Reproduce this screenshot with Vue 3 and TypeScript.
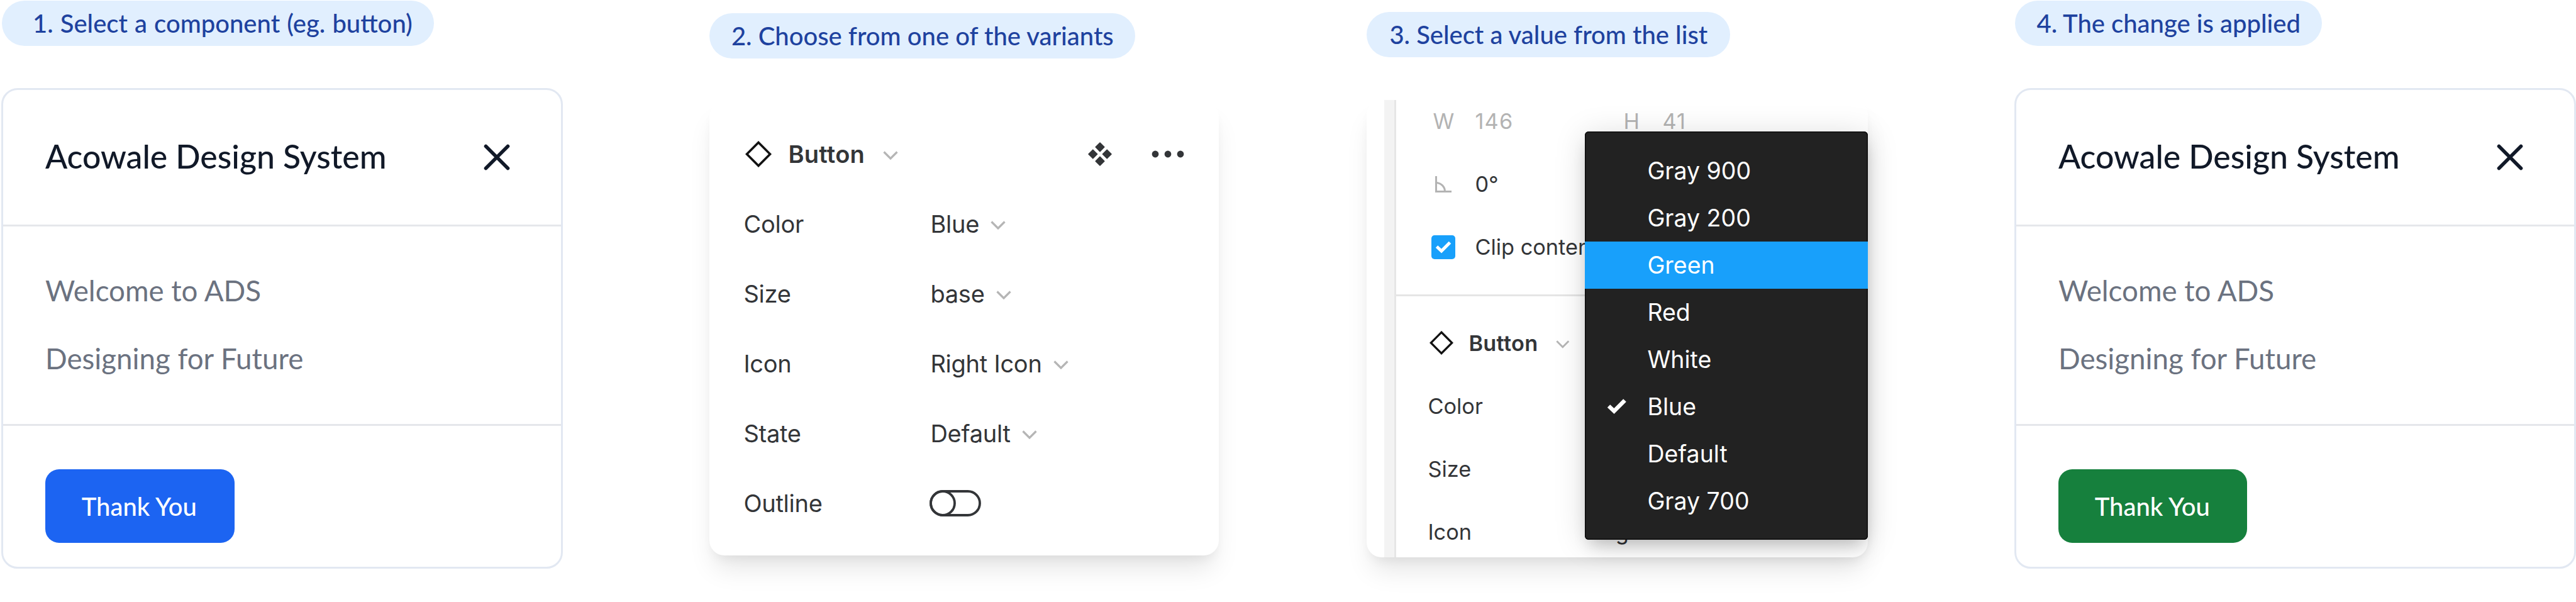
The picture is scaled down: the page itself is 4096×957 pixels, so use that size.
<script setup lang="ts">
interface Property {
  label: string
  value?: string
}

const properties: Property[] = [
  { label: 'Color', value: 'Blue' },
  { label: 'Size', value: 'base' },
  { label: 'Icon', value: 'Right Icon' },
  { label: 'State', value: 'Default' },
  { label: 'Outline' },
]

const colors: string[] = ['Gray 900', 'Gray 200', 'Green', 'Red', 'White', 'Blue', 'Default', 'Gray 700']
const highlighted = 'Green'
const selected = 'Blue'
</script>

<template>
  <main class="steps">
    <section class="step step-select">
      <h2 class="pill pill-first">1. Select a component (eg. button)</h2>
      <article class="modal">
        <header class="modal-head">
          <h3 class="modal-title">Acowale Design System</h3>
          <svg class="close" viewBox="0 0 42 42"><path d="M3.5 3.5 38.5 38.5M38.5 3.5 3.5 38.5" /></svg>
        </header>
        <div class="modal-body">
          <p>Welcome to ADS</p>
          <p>Designing for Future</p>
        </div>
        <footer class="modal-foot"><button class="cta blue">Thank You</button></footer>
      </article>
    </section>

    <section class="step step-variants">
      <h2 class="pill">2. Choose from one of the variants</h2>
      <article class="panel">
        <div class="row">
          <svg class="diamond" viewBox="0 0 42 42"><path d="M21 2.5 39.5 21 21 39.5 2.5 21Z" /></svg>
          <strong class="name">Button</strong>
          <svg class="chevron" viewBox="0 0 24 14"><path d="M1.5 1.5 12 12 22.5 1.5" /></svg>
          <svg class="variants-icon" viewBox="0 0 38 38">
            <path d="M19 1l6.8 6.8L19 14.6l-6.8-6.8ZM19 23.4l6.8 6.8L19 37l-6.8-6.8ZM7.8 12.2l6.8 6.8-6.8 6.8L1 19ZM30.2 12.2L37 19l-6.8 6.8-6.8-6.8Z" />
          </svg>
          <svg class="more" viewBox="0 0 52 12"><circle cx="6" cy="6" r="5.4" /><circle cx="26" cy="6" r="5.4" /><circle cx="46" cy="6" r="5.4" /></svg>
        </div>
        <div v-for="p in properties" :key="p.label" class="row">
          <span class="label">{{ p.label }}</span>
          <template v-if="p.value">
            <span>{{ p.value }}</span>
            <svg class="chevron" viewBox="0 0 24 14"><path d="M1.5 1.5 12 12 22.5 1.5" /></svg>
          </template>
          <svg v-else class="toggle" viewBox="0 0 82 42">
            <rect x="2" y="2" width="78" height="38" rx="19" /><circle cx="21" cy="21" r="19" />
          </svg>
        </div>
      </article>
    </section>

    <section class="step step-value">
      <h2 class="pill">3. Select a value from the list</h2>
      <article class="inspector">
        <div class="gutter"></div>
        <div class="fields">
          <div class="group layout">
            <div class="line">
              <span class="key key-w">W</span><span class="num muted">146</span>
              <span class="key key-h">H</span><span class="num muted">41</span>
            </div>
            <div class="line">
              <span class="key"><svg class="angle" viewBox="0 0 26 26"><path d="M1.5 0V24.5H26M1.5 10.5A14 14 0 0 1 15.5 24.5" /></svg></span>
              <span class="num">0°</span>
            </div>
            <div class="line">
              <span class="key"><svg class="check" viewBox="0 0 38 38"><rect width="38" height="38" rx="5" /><path d="M8.5 18 16 25 29.5 11.5" /></svg></span>
              <span>Clip content</span>
            </div>
          </div>
          <div class="group variant">
            <div class="line">
              <svg class="diamond" viewBox="0 0 42 42"><path d="M21 2.5 39.5 21 21 39.5 2.5 21Z" /></svg>
              <strong class="name">Button</strong>
              <svg class="chevron" viewBox="0 0 24 14"><path d="M1.5 1.5 12 12 22.5 1.5" /></svg>
            </div>
            <div v-for="p in properties.slice(0, 3)" :key="p.label" class="line">
              <span class="label">{{ p.label }}</span><span>{{ p.value }}</span>
              <svg class="chevron" viewBox="0 0 24 14"><path d="M1.5 1.5 12 12 22.5 1.5" /></svg>
            </div>
          </div>
        </div>
        <ul class="menu">
          <li v-for="c in colors" :key="c" :class="{ active: c === highlighted }">
            <svg v-if="c === selected" class="tick" viewBox="0 0 32 26"><path d="M3 12.5 11.5 20.5 28.5 3.5" /></svg>
            {{ c }}
          </li>
        </ul>
      </article>
    </section>

    <section class="step step-applied">
      <h2 class="pill">4. The change is applied</h2>
      <article class="modal">
        <header class="modal-head">
          <h3 class="modal-title">Acowale Design System</h3>
          <svg class="close" viewBox="0 0 42 42"><path d="M3.5 3.5 38.5 38.5M38.5 3.5 3.5 38.5" /></svg>
        </header>
        <div class="modal-body">
          <p>Welcome to ADS</p>
          <p>Designing for Future</p>
        </div>
        <footer class="modal-foot"><button class="cta green">Thank You</button></footer>
      </article>
    </section>
  </main>
</template>

<style>
body {
  background: #fff;
}
</style>

<style scoped>
* {
  box-sizing: border-box;
}

.steps {
  display: flex;
  align-items: flex-start;
  width: 4096px;
  height: 957px;
  padding-left: 2px;
  overflow: hidden;
  font-family: Inter, 'Liberation Sans', sans-serif;
  white-space: nowrap;
}

.step {
  flex: none;
  display: flex;
  flex-direction: column;
  align-items: flex-start;
}

.step-select {
  width: 1126.4px;
  padding-top: 1px;
}

.step-variants {
  width: 1045px;
  padding-top: 21px;
}

.step-value {
  width: 1029.6px;
  padding-top: 18.5px;
}

.step-applied {
  padding-top: 1px;
}

svg {
  flex: none;
  display: block;
  fill: none;
}

.pill {
  height: 72px;
  margin: 0;
  padding: 0 34.5px;
  border-radius: 36px;
  background: #e1effe;
  color: #1e429f;
  font: 500 40px/72px Lato, sans-serif;
}

.pill-first {
  margin-left: 1px;
  padding: 0 34px 0 49px;
  word-spacing: 1px;
}

.step-value .pill {
  padding: 0 36px;
}

.step-applied .pill {
  margin-left: 1px;
}

/* Modal preview */
.modal {
  width: 893px;
  height: 764px;
  margin-top: 67px;
  border: 3px solid #e2e8f2;
  border-radius: 26px;
  background: #fff;
  font-family: Lato, sans-serif;
}

.modal-head {
  display: flex;
  justify-content: space-between;
  align-items: center;
  height: 217px;
  padding: 0 81px 0 67px;
  border-bottom: 3px solid #e5e7eb;
}

.modal-title {
  margin: 0;
  padding-bottom: 5px;
  color: #111928;
  font-size: 51.8px;
  font-weight: 500;
}

.close {
  width: 42px;
  height: 42px;
  stroke: #111928;
  stroke-width: 5.6;
  stroke-linecap: round;
}

.modal-body {
  height: 317px;
  padding: 47.6px 67px 0;
  border-bottom: 3px solid #e5e7eb;
  color: #6b7280;
  font-size: 45.7px;
  line-height: 108.5px;
}

.modal-body p {
  margin: 0;
}

.modal-foot {
  padding: 69px 67px 0;
}

.cta {
  width: 300.5px;
  height: 117px;
  padding: 0 2px 0 0;
  border: 0;
  border-radius: 22px;
  color: #fff;
  font: 500 40px Lato, sans-serif;
}

.blue {
  background: #1c64f2;
}

.green {
  background: #16803d;
}

/* Component property panel */
.panel,
.inspector {
  border-radius: 24px;
  background: #fff;
  box-shadow: 0 28px 42px -8px rgba(0, 0, 0, 0.1), 0 11px 17px -6px rgba(0, 0, 0, 0.06);
  color: #333538;
}

.panel {
  width: 810px;
  height: 721.5px;
  margin-top: 68.5px;
  padding: 27.5px 53px 27.5px 54px;
  font-size: 38px;
  letter-spacing: -0.25px;
}

.row {
  display: flex;
  align-items: center;
  height: 111px;
}

.row .label {
  width: 297px;
}

.name {
  font-weight: 600;
  letter-spacing: 0.3px;
}

.diamond {
  stroke: #111;
  stroke-width: 3.6;
}

.row .diamond {
  width: 42px;
  height: 42px;
  margin: 0 26px 0 3px;
}

.chevron {
  stroke: #b5b5b5;
  stroke-width: 3.2;
}

.row .chevron {
  width: 24px;
  height: 14px;
  margin: 5px 0 0 18px;
}

.row .name + .chevron {
  margin-left: 29px;
}

.variants-icon {
  width: 38px;
  height: 38px;
  margin-left: auto;
  fill: #333538;
  stroke: #333538;
  stroke-linejoin: round;
  stroke-width: 1.6;
}

.more {
  width: 52px;
  height: 12px;
  margin: 0 2px 0 63px;
  fill: #333538;
}

.toggle {
  width: 82px;
  height: 42px;
  margin-left: -1px;
  stroke: #333538;
  stroke-width: 3.8;
}

/* Inspector with the colour menu */
.inspector {
  position: relative;
  display: flex;
  width: 797px;
  height: 727px;
  margin-top: 68px;
  padding-left: 28px;
  font-size: 34.3px;
}

.gutter {
  width: 19px;
  border-right: 3.5px solid #e6e6e6;
  background: #f3f3f3;
}

.fields {
  flex: 1;
  overflow: hidden;
  border-radius: 0 24px 24px 0;
}

.layout {
  margin-top: -15.7px;
  padding: 0 0 25.2px 56px;
  border-bottom: 3px solid #e5e5e5;
}

.variant {
  padding: 24.2px 0 0 50px;
}

.line {
  display: flex;
  align-items: center;
  height: 100px;
}

.key {
  width: 69px;
  color: #b3b3b3;
}

.key-w {
  padding-left: 2px;
}

.key + span {
  width: 236px;
}

.key + span.num:last-child {
  width: auto;
}

.key-h {
  width: 62px;
}

.muted {
  color: #b3b3b3;
  letter-spacing: 1.2px;
}

.angle {
  width: 26px;
  height: 26px;
  margin-left: 6px;
  stroke: #b3b3b3;
  stroke-width: 3;
}

.check {
  width: 38px;
  height: 38px;
}

.check rect {
  fill: #18a0fb;
}

.check path {
  stroke: #fff;
  stroke-width: 5;
}

.line .label {
  width: 268px;
}

.line .diamond {
  width: 38px;
  height: 38px;
  margin: 0 24px 0 3px;
}

.line .chevron {
  width: 21.6px;
  height: 12.6px;
  margin: 5px 0 0 18px;
}

.line .name + .chevron {
  margin-left: 29px;
}

.menu {
  position: absolute;
  top: 50px;
  right: 0;
  width: 450px;
  height: 649px;
  margin: 0;
  padding: 25px 0;
  border-radius: 6px;
  background: #222;
  box-shadow: inset 0 0 0 1.5px #0c0c0c, 0 6px 50px rgba(0, 0, 0, 0.15), 0 15px 24px -8px rgba(0, 0, 0, 0.2);
  color: #fff;
  font-size: 37.5px;
  line-height: 75px;
  list-style: none;
}

.menu li {
  position: relative;
  padding-left: 99px;
}

.menu .active {
  background: #18a0fb;
}

.tick {
  position: absolute;
  top: 24px;
  left: 35px;
  width: 32px;
  height: 26px;
  stroke: #fff;
  stroke-width: 6.5;
}
</style>
